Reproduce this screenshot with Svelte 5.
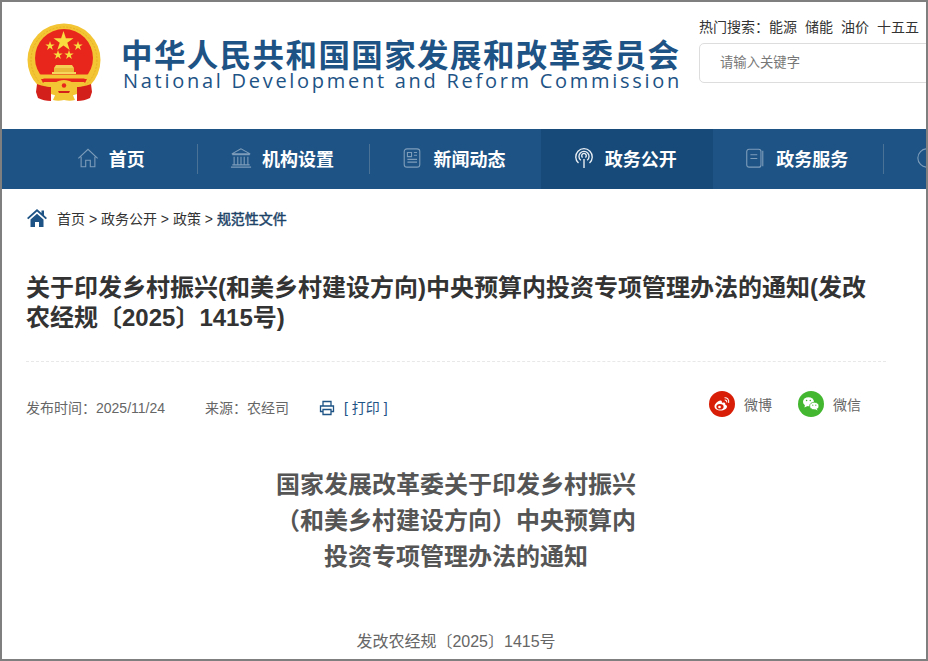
<script>
  const nav = [
    { label: '首页', icon: 'home' },
    { label: '机构设置', icon: 'bank' },
    { label: '新闻动态', icon: 'news' },
    { label: '政务公开', icon: 'signal', active: true },
    { label: '政务服务', icon: 'book' },
    { label: '', icon: 'circle' }
  ];
  const hot = ['能源', '储能', '油价', '十五五'];
</script>

<div class="frame">
  <header class="top">
    <div class="brand">
      <svg class="emblem" viewBox="0 0 74 80" width="74" height="80" aria-hidden="true">
        <circle cx="37" cy="38" r="36.500" fill="#f3c433"/>
        <circle cx="37" cy="38" r="33" fill="none" stroke="#e3ab22" stroke-width=".8" stroke-dasharray="2 1.500"/>
        <circle cx="37" cy="36" r="29" fill="#e8261c"/>
        <polygon fill="#f9dc3e" points="36.500,9 38.900,16.200 46.500,16.200 40.300,20.700 42.700,27.900 36.500,23.400 30.300,27.900 32.700,20.700 26.500,16.200 34.100,16.200"/>
        <polygon fill="#f9dc3e" points="23,19 24.100,22.400 27.700,22.400 24.800,24.500 25.900,27.900 23,25.800 20.100,27.900 21.200,24.500 18.300,22.400 21.900,22.400"/>
        <polygon fill="#f9dc3e" points="51,19 52.100,22.400 55.700,22.400 52.800,24.500 53.900,27.900 51,25.800 48.100,27.900 49.200,24.500 46.300,22.400 49.900,22.400"/>
        <polygon fill="#f9dc3e" points="31,28 32.100,31.400 35.700,31.400 32.800,33.500 33.900,36.900 31,34.800 28.100,36.900 29.200,33.500 26.300,31.400 29.900,31.400"/>
        <polygon fill="#f9dc3e" points="42,28 43.100,31.400 46.700,31.400 43.800,33.500 44.900,36.900 42,34.800 39.100,36.900 40.200,33.500 37.300,31.400 40.900,31.400"/>
        <path fill="#f4cf54" d="M29 43h16l2 3H27z"/>
        <path fill="#e9b93a" d="M27 46h20v4H27z"/>
        <path fill="#f6d65c" d="M25 50h24v2H25z"/>
        <path fill="#f3c433" d="M13 52.500h48l-1 4H14z"/>
        <path fill="#e8261c" d="M14 57h46l-2 4H16z"/>
        <path fill="#f3c433" d="M16 60h42l-2 2H18z"/>
        <path fill="#d4201b" d="M10 62c3 1 9 3 14 3v14c-5 0-9-1-13-3l-2-6zM64 62c-3 1-9 3-14 3v14c5 0 9-1 13-3l2-6z"/>
        <path fill="#f3c433" d="M24 62c4 0 6-4 13-4s9 4 13 4v7l-5 2 3 7c-3 1-7 1-11 0-4 1-8 1-11 0l3-7-5-2z"/>
        <path fill="#d4201b" d="M31 69h12l-1 2H32z"/>
        <circle cx="37" cy="63.500" r="2.200" fill="#e8261c"/>
      </svg>
      <div class="names">
        <div class="cn">中华人民共和国国家发展和改革委员会</div>
        <div class="en">National Development and Reform Commission</div>
      </div>
    </div>
    <div class="search">
      <div class="hot">
        <span>热门搜索：</span>
        {#each hot as h}<a href="#top">{h}</a>{/each}
      </div>
      <div class="input">请输入关键字</div>
    </div>
  </header>

  <nav class="nav">
    {#each nav as item, i}
      <div class="item" class:active={item.active} class:last={i === 5} class:sep={i < 5 && !nav[i + 1]?.active && !item.active}>
        <svg class="ico" viewBox="0 0 24 24" width="22" height="22" fill="none" stroke="currentColor" stroke-width="1.2" aria-hidden="true">
          {#if item.icon === 'home'}
            <path d="M1.500 12.500 12 2.500l10.500 10M4.500 10.500V21.500h5v-7h5v7h5V10.500"/>
          {:else if item.icon === 'bank'}
            <path d="M12 2 2 7.500h20zM2.500 8.500h19M4.500 10.500v8.500M8.500 10.500v8.500M12 10.500v8.500M15.500 10.500v8.500M19.500 10.500v8.500M2.500 19.500h19M1 22h22"/>
          {:else if item.icon === 'news'}
            <rect x="3.500" y="2" width="17" height="20" rx="3"/>
            <path d="M7 6h4.500v4.500H7zM14 6h3.500M14 9h3.500M7 13.500h10.500M7 16.500h10.500"/>
          {:else if item.icon === 'signal'}
            <path stroke-width="1.500" d="M12 13v10M6 17.500a9 9 0 1 1 12 0M8.500 14.500a5.500 5.500 0 1 1 7 0M10.500 11.500a2.500 2.500 0 1 1 3 0"/>
          {:else if item.icon === 'book'}
            <rect x="3" y="2.500" width="15.500" height="19.500" rx="2.500"/>
            <path d="M7 8.500h7.500M7 12.500h7.500M20.500 4v17"/>
          {:else}
            <circle cx="12" cy="12" r="10"/>
          {/if}
        </svg>
        {#if item.label}<span>{item.label}</span>{/if}
      </div>
    {/each}
  </nav>

  <main class="body">
    <div class="crumbs">
      <svg viewBox="0 0 20 18" width="20" height="18" aria-hidden="true">
        <path fill="#1d5385" d="M10 0 0 9l1.300 1.300L10 2.600l8.700 7.700L20 9l-3-2.700V1.500h-2.500v2.600zM3.500 10.500V18h4.500v-5h4v5h4.500v-7.500L10 4.700z"/>
      </svg>
      <span class="path">首页 &gt; 政务公开 &gt; 政策 &gt; <b>规范性文件</b></span>
    </div>

    <h1>关于印发乡村振兴(和美乡村建设方向)中央预算内投资专项管理办法的通知(发改农经规〔2025〕1415号)</h1>

    <div class="meta">
      <div class="left">
        <span class="date">发布时间：2025/11/24</span>
        <span class="src">来源：农经司</span>
        <span class="print">
          <svg viewBox="0 0 16 16" width="16" height="16" fill="none" stroke="#1d5385" stroke-width="1.300" aria-hidden="true">
            <path d="M4 6V1.500h8V6M4 11.500H1.500V6h13v5.500H12M4 9.500h8v5H4z"/>
          </svg>
          <span>[ 打印 ]</span>
        </span>
      </div>
      <div class="share">
        <span class="sh">
          <svg viewBox="0 0 26 26" width="26" height="26" aria-hidden="true">
            <circle cx="13" cy="13" r="13" fill="#d81e06"/>
            <path fill="#fff" d="M11.500 9.500c-3 .6-6 3.500-6 6 0 2.400 2.800 4 6 4 3.800 0 6.500-2 6.500-4 0-1.300-1.200-1.900-1.900-2.100.5-1.500-.3-2.300-2.500-1.700-1 .3-.7-1-.9-1.700-.2-.6-.9-.7-1.200-.5z"/>
            <ellipse cx="11" cy="15.800" rx="3.600" ry="2.800" fill="#d81e06"/>
            <circle cx="10.500" cy="16" r="1.300" fill="#fff"/>
            <path fill="none" stroke="#fff" stroke-width="1.100" d="M15.500 6.800c2.600-.3 4.800 1.800 4.100 5M15.700 9c1.300-.1 2.300 1 2 2.300"/>
          </svg>
          微博
        </span>
        <span class="sh">
          <svg viewBox="0 0 26 26" width="26" height="26" aria-hidden="true">
            <circle cx="13" cy="13" r="13" fill="#43b72f"/>
            <ellipse cx="10.500" cy="10.800" rx="5.500" ry="4.500" fill="#fff"/>
            <path fill="#fff" d="M7 13.500 6.500 16.500l3-1.500z"/>
            <ellipse cx="16.300" cy="15" rx="4.700" ry="3.800" fill="#fff" stroke="#43b72f" stroke-width=".8"/>
            <path fill="#fff" d="M18.500 17.500l1.200 2-2.500-1.200z"/>
            <circle cx="8.600" cy="9.500" r=".8" fill="#43b72f"/>
            <circle cx="12.300" cy="9.500" r=".8" fill="#43b72f"/>
            <circle cx="14.800" cy="14.200" r=".6" fill="#43b72f"/>
            <circle cx="17.800" cy="14.200" r=".6" fill="#43b72f"/>
          </svg>
          微信
        </span>
      </div>
    </div>

    <h2>国家发展改革委关于印发乡村振兴<br/>（和美乡村建设方向）中央预算内<br/>投资专项管理办法的通知</h2>
    <p class="doc">发改农经规〔2025〕1415号</p>
  </main>
</div>

<style>
  :global(body) {
    margin: 0;
    background: #fff;
    font-family: "Liberation Sans", "Noto Sans CJK SC", sans-serif;
  }
  .frame {
    box-sizing: border-box;
    width: 928px;
    height: 661px;
    border: 2px solid #7f7f7f;
    overflow: hidden;
  }
  .top {
    height: 127px;
    box-sizing: border-box;
    display: flex;
    justify-content: space-between;
    padding: 20px 0 0 25px;
  }
  .brand {
    display: flex;
    gap: 20px;
  }
  .emblem {
    flex: none;
  }
  .names {
    padding-top: 15px;
    color: #1d5385;
  }
  .cn {
    font: 700 31.500px/32px "Noto Sans CJK SC", sans-serif;
    white-space: nowrap;
    letter-spacing: 1.400px;
  }
  .en {
    font: 400 20px/24px "Open Sans", sans-serif;
    letter-spacing: 2.720px;
    padding-left: 2px;
    white-space: nowrap;
  }
  .search {
    width: 240px;
    margin-right: -13px;
    flex: none;
    margin-top: -5px;
  }
  .hot {
    font-size: 14px;
    line-height: 20px;
    color: #333;
    display: flex;
    white-space: nowrap;
  }
  .hot a {
    color: #333;
    text-decoration: none;
    margin-right: 8px;
  }
  .input {
    box-sizing: border-box;
    height: 40px;
    margin-top: 6px;
    border: 1px solid #ddd;
    border-radius: 5px;
    padding: 0 0 0 20px;
    font-size: 13.330px;
    line-height: 38px;
    color: #777;
  }
  .nav {
    height: 60px;
    background: #1d5385;
    display: flex;
    padding-left: 25px;
    overflow: hidden;
  }
  .item {
    flex: 0 0 171.400px;
    box-sizing: border-box;
    position: relative;
    display: flex;
    align-items: center;
    justify-content: center;
    gap: 10px;
    padding: 0 4px 2px 0;
    color: #fff;
    font-size: 18px;
    font-weight: 700;
    white-space: nowrap;
  }
  .item.last {
    justify-content: flex-start;
    padding-left: 32px;
  }
  .item .ico {
    color: #7e9dba;
  }
  .item.active {
    background: #174a78;
  }
  .item.active .ico {
    color: #e8eef4;
  }
  .item.sep::after {
    content: "";
    position: absolute;
    right: 0;
    top: 15px;
    height: 30px;
    width: 1px;
    background: #4a7297;
  }
  .body {
    padding: 0 40px 0 24px;
  }
  .crumbs {
    display: flex;
    align-items: center;
    gap: 10px;
    padding-top: 20px;
    padding-left: 1px;
    height: 18px;
    font-size: 14px;
    color: #333;
  }
  .crumbs b {
    font-weight: 400;
    color: #1d4468;
    -webkit-text-stroke: .45px #1d4468;
  }
  h1 {
    margin: 46px 0 0;
    font-size: 24px;
    line-height: 30px;
    font-weight: 700;
    color: #333;
    padding-bottom: 28px;
    border-bottom: 1px dashed #e8e8e8;
  }
  .meta {
    display: flex;
    justify-content: space-between;
    align-items: flex-start;
    margin-top: 29px;
    font-size: 14px;
    color: #666;
  }
  .left {
    display: flex;
    align-items: center;
    padding-top: 9px;
    line-height: 16px;
  }
  .src {
    margin-left: 40px;
  }
  .print {
    margin-left: 30px;
    display: flex;
    align-items: center;
    gap: 9px;
    color: #1d5385;
  }
  .share {
    display: flex;
    gap: 26px;
    margin-right: 25px;
  }
  .sh {
    display: flex;
    align-items: center;
    gap: 9px;
  }
  h2 {
    margin: 50px 0 0;
    text-align: center;
    font-size: 24px;
    line-height: 36px;
    font-weight: 700;
    color: #555;
  }
  .doc {
    margin: 55px 0 0;
    text-align: center;
    font-size: 16px;
    line-height: 24px;
    color: #666;
  }
</style>
